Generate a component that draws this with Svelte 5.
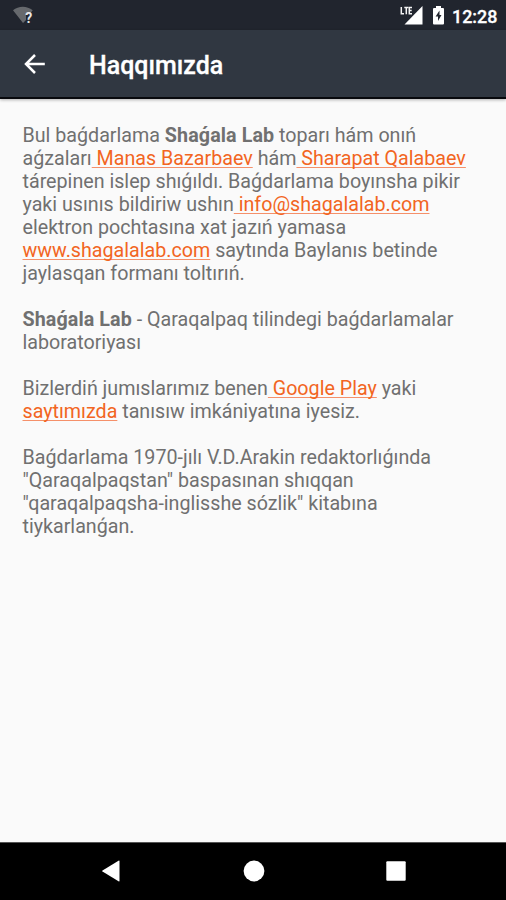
<script>
  const link = (text) => ({ text, kind: 'link' });
  const bold = (text) => ({ text, kind: 'bold' });
  const plain = (text) => ({ text, kind: 'plain' });

  const paragraphs = [
    [
      [plain('Bul baǵdarlama '), bold('Shaǵala Lab'), plain(' toparı hám onıń')],
      [plain('aǵzaları'), link(' Manas Bazarbaev'), plain(' hám'), link(' Sharapat Qalabaev')],
      [plain('tárepinen islep shıǵıldı. Baǵdarlama boyınsha pikir')],
      [plain('yaki usınıs bildiriw ushın'), link(' info@shagalalab.com')],
      [plain('elektron pochtasına xat jazıń yamasa')],
      [link('www.shagalalab.com'), plain(' saytında Baylanıs betinde')],
      [plain('jaylasqan formanı toltırıń.')]
    ],
    [
      [bold('Shaǵala Lab'), plain(' - Qaraqalpaq tilindegi baǵdarlamalar')],
      [plain('laboratoriyası')]
    ],
    [
      [plain('Bizlerdiń jumıslarımız benen'), link(' Google Play'), plain(' yaki')],
      [link('saytımızda'), plain(' tanısıw imkániyatına iyesiz.')]
    ],
    [
      [plain('Baǵdarlama 1970-jılı V.D.Arakin redaktorlıǵında')],
      [plain('"Qaraqalpaqstan" baspasınan shıqqan')],
      [plain('"qaraqalpaqsha-inglisshe sózlik" kitabına')],
      [plain('tiykarlanǵan.')]
    ]
  ];
</script>

<div class="screen">
  <div class="status">
    <svg class="wifi" width="24" height="20" viewBox="0 0 24 20">
      <path d="M1 4.3C6.5-.5 15-.5 20.700 4.300L17.500 8.200L14 8.200L14 14L11 17Z" fill="#66696d" />
      <text x="13.200" y="16.500" font-size="14" font-weight="700" fill="#e8e8e8">?</text>
    </svg>
    <div class="right">
      <svg width="24" height="20" viewBox="0 0 24 20">
        <path d="M22.500 0V18.500H4.500Z" fill="#fff" />
        <path d="M0 0H12.500V9H0Z" fill="#21252e" />
        <path d="M1.300 1V7.700H4M4.300 1.500H8.300M6.300 1.500V8.300M12 1.500H9.300V7.700H12M9 4.600H11.700" fill="none" stroke="#f4f4f4" stroke-width="1.500" />
      </svg>
      <svg class="battery" width="13" height="20" viewBox="0 0 13 20">
        <path d="M4 0H9V2H11Q12 2 12 3V17.500Q12 18.500 11 18.500H2Q1 18.500 1 17.500V3Q1 2 2 2H4Z" fill="#fff" />
        <path d="M7.500 4.500L3.600 10.500H6V15L9.500 9H7.500Z" fill="#21252e" />
      </svg>
      <span class="time">12:28</span>
    </div>
  </div>
  <header>
    <svg class="back" width="22" height="22" viewBox="0 0 22 22">
      <path d="M20.800 11H2.500M11 2L2 11L11 20" fill="none" stroke="#fff" stroke-width="2.500" />
    </svg>
    <h1>Haqqımızda</h1>
  </header>
  <main>
    {#each paragraphs as lines}
      <p>
        {#each lines as line}
          <span class="line">{#each line as part}{#if part.kind === 'link'}<a href="#top">{part.text}</a>{:else if part.kind === 'bold'}<b>{part.text}</b>{:else}{part.text}{/if}{/each}</span>
        {/each}
      </p>
    {/each}
  </main>
  <nav>
    <svg width="20" height="22" viewBox="0 0 20 22"><path d="M18.500 1V21Q18.500 21.800 17.500 21.300L1.500 11.600Q.700 11 1.500 10.400L17.500 .700Q18.500 .200 18.500 1Z" fill="#fff" /></svg>
    <svg width="22" height="22" viewBox="0 0 22 22"><circle cx="11" cy="11" r="10.400" fill="#fff" /></svg>
    <svg width="20" height="20" viewBox="0 0 20 20"><rect x=".300" y=".300" width="19.400" height="19.400" rx="1" fill="#fff" /></svg>
  </nav>
</div>

<style>
  .screen {
    width: 506px;
    height: 900px;
    display: flex;
    flex-direction: column;
    overflow: hidden;
    background: #fafafa;
    font-family: Roboto, "Noto Sans", sans-serif;
  }
  .status {
    height: 30px;
    flex: none;
    display: flex;
    justify-content: space-between;
    align-items: flex-start;
    box-sizing: border-box;
    padding: 6px 9px 0 12px;
    background: #21252e;
    color: #fff;
  }
  .right {
    display: flex;
  }
  .battery {
    margin-left: 8px;
  }
  .time {
    margin-left: 7px;
    font-size: 17.9px;
    line-height: 21px;
    font-weight: 500;
    width: 45px;
    white-space: nowrap;
    -webkit-text-stroke: 0.3px #fff;
  }
  header {
    height: 69px;
    flex: none;
    box-sizing: border-box;
    display: flex;
    align-items: center;
    padding: 0 24px;
    background: #303741;
    border-bottom: 2px solid #08090d;
    box-shadow: 0 1px 3px rgba(0, 0, 0, 0.3);
  }
  .back {
    margin-top: 1px;
  }
  h1 {
    margin: 4px 0 0 43px;
    color: #fff;
    font-size: 25px;
    line-height: 30px;
    font-weight: 500;
    -webkit-text-stroke: 0.3px #fff;
  }
  main {
    flex: 1;
    padding: 25px 22.500px 0;
    color: #707070;
    font-size: 19.68px;
    line-height: 23px;
  }
  p {
    margin: 0 0 23px;
  }
  .line {
    display: block;
    white-space: pre;
  }
  b {
    font-weight: 700;
    letter-spacing: 0.1px;
  }
  a {
    color: #f26522;
    text-decoration: underline;
    text-decoration-thickness: 1px;
    text-decoration-color: #f5906a;
    text-decoration-skip-ink: none;
    text-underline-offset: 2px;
  }
  nav {
    height: 58px;
    flex: none;
    box-sizing: border-box;
    border-top: 1px solid #555;
    display: flex;
    align-items: center;
    justify-content: space-between;
    padding: 0 100px 2px 101px;
    background: #000;
  }
</style>
